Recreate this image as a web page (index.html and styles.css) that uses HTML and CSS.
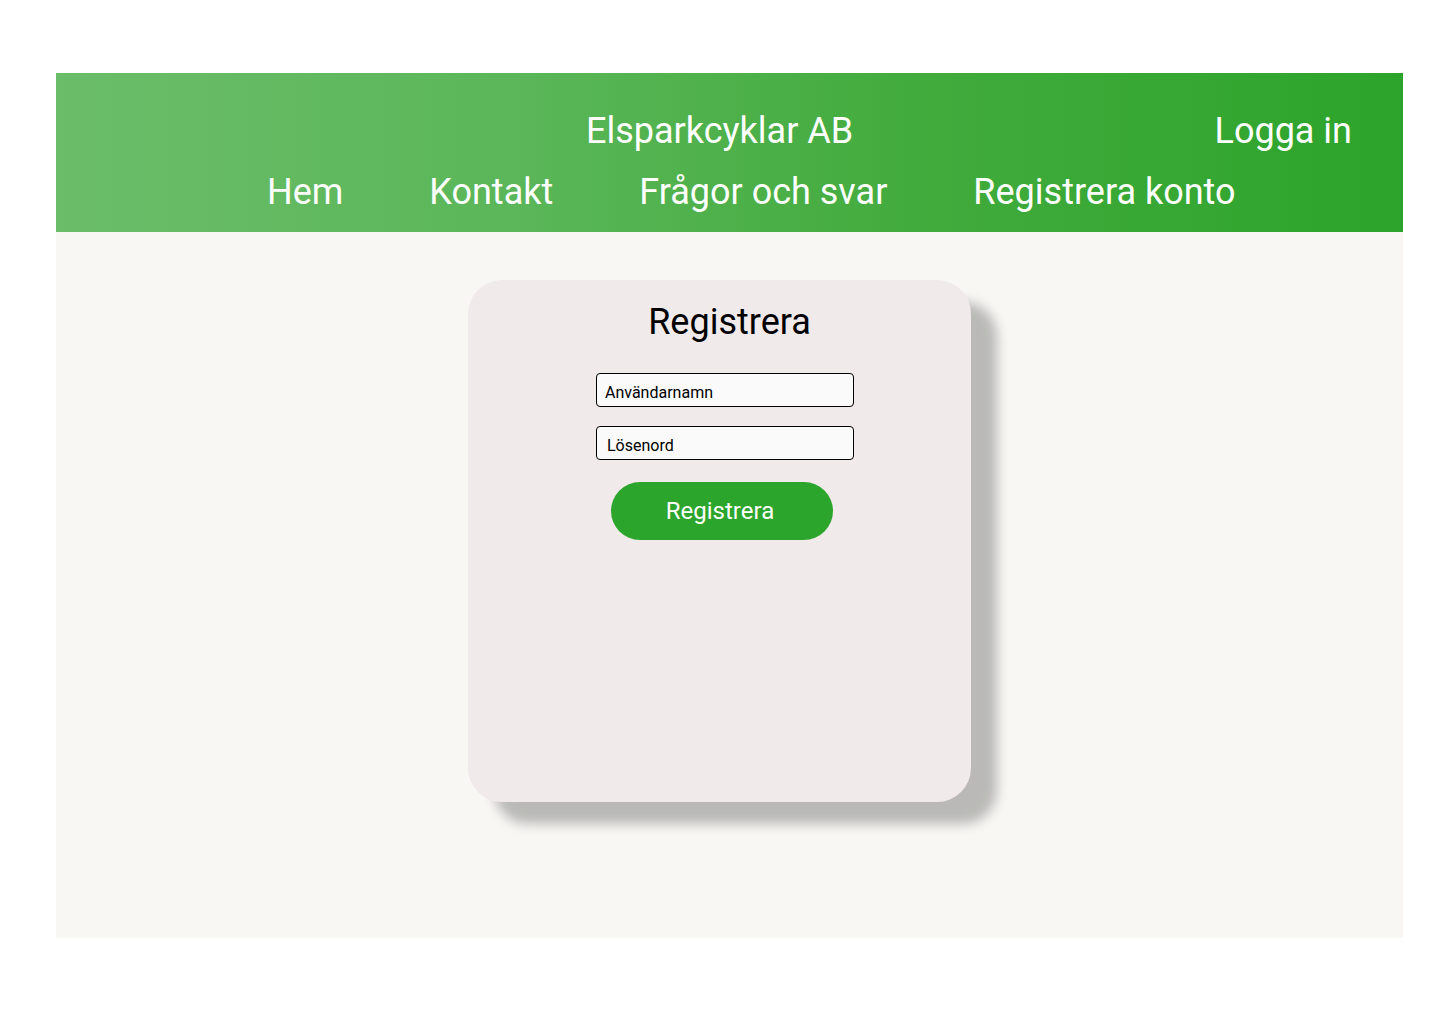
FILE: index.html
```html
<!DOCTYPE html>
<html lang="sv">
<head>
<meta charset="utf-8">
<title>Elsparkcyklar AB - Registrera</title>
<link rel="stylesheet" href="styles.css">
</head>
<body>
<div class="page">
  <header class="header">
    <div class="top-row">
      <span class="brand">Elsparkcyklar AB</span>
      <a class="login" href="#">Logga in</a>
    </div>
    <nav class="nav">
      <a href="#">Hem</a>
      <a href="#">Kontakt</a>
      <a href="#">Frågor och svar</a>
      <a href="#">Registrera konto</a>
    </nav>
  </header>
  <main class="main">
    <div class="card">
      <h1 class="card-title">Registrera</h1>
      <form class="form">
        <input class="field field-user" type="text" placeholder="Användarnamn">
        <input class="field field-pass" type="password" placeholder="Lösenord">
        <button class="btn" type="button">Registrera</button>
      </form>
    </div>
  </main>
</div>
</body>
</html>
```

FILE: styles.css
```css
* { box-sizing: border-box; }
html, body { margin: 0; padding: 0; background: #ffffff; }
body { font-family: Roboto, "Liberation Sans", sans-serif; }

.page {
  margin: 73px 37px 0 56px;
  width: 1347px;
}

.header {
  height: 159px;
  background: linear-gradient(90deg, #6bbd69 0%, #5ab658 35%, #41ab3c 65%, #2ca42b 100%);
  color: #ffffff;
  padding-top: 38px;
}

.top-row {
  display: flex;
  justify-content: space-between;
  align-items: baseline;
  padding-left: 530px;
  padding-right: 51px;
  font-size: 36px;
  line-height: 40px;
}

.brand { font-weight: 400; }

.login { color: #ffffff; text-decoration: none; }

.nav {
  display: flex;
  gap: 86px;
  padding-left: 211px;
  margin-top: 21px;
  font-size: 36px;
  line-height: 40px;
}

.nav a { color: #ffffff; text-decoration: none; }

.main {
  height: 706px;
  background: #f8f7f4;
  padding-top: 48px;
  padding-left: 412px;
}

.card {
  width: 503px;
  height: 522px;
  background: #f0eaea;
  border-radius: 34px;
  box-shadow: 26px 22px 12px rgba(0, 0, 0, 0.25);
  display: flex;
  flex-direction: column;
  align-items: center;
  padding-top: 21px;
}

.card-title {
  margin: 0 0 0 20px;
  font-size: 36px;
  line-height: 42px;
  font-weight: 400;
  color: #000000;
}

.form {
  margin-top: 30px;
  display: flex;
  flex-direction: column;
  align-items: center;
  padding-left: 11px;
}

.field {
  width: 258px;
  height: 34px;
  border: 1px solid #000000;
  border-radius: 4px;
  background: #fafafa;
  font-family: Roboto, "Liberation Sans", sans-serif;
  font-size: 16px;
  padding: 4px 8px 0;
  color: #000000;
}

.field::placeholder { color: #000000; opacity: 1; }

.field-pass { margin-top: 19px; padding-left: 10px; }

.btn {
  margin-top: 22px;
  margin-right: 6px;
  width: 222px;
  height: 58px;
  border: none;
  border-radius: 29px;
  background: #2ca52c;
  color: #ffffff;
  font-family: Roboto, "Liberation Sans", sans-serif;
  font-size: 24px;
  padding: 0 4px 0 0;
  cursor: pointer;
}
```
